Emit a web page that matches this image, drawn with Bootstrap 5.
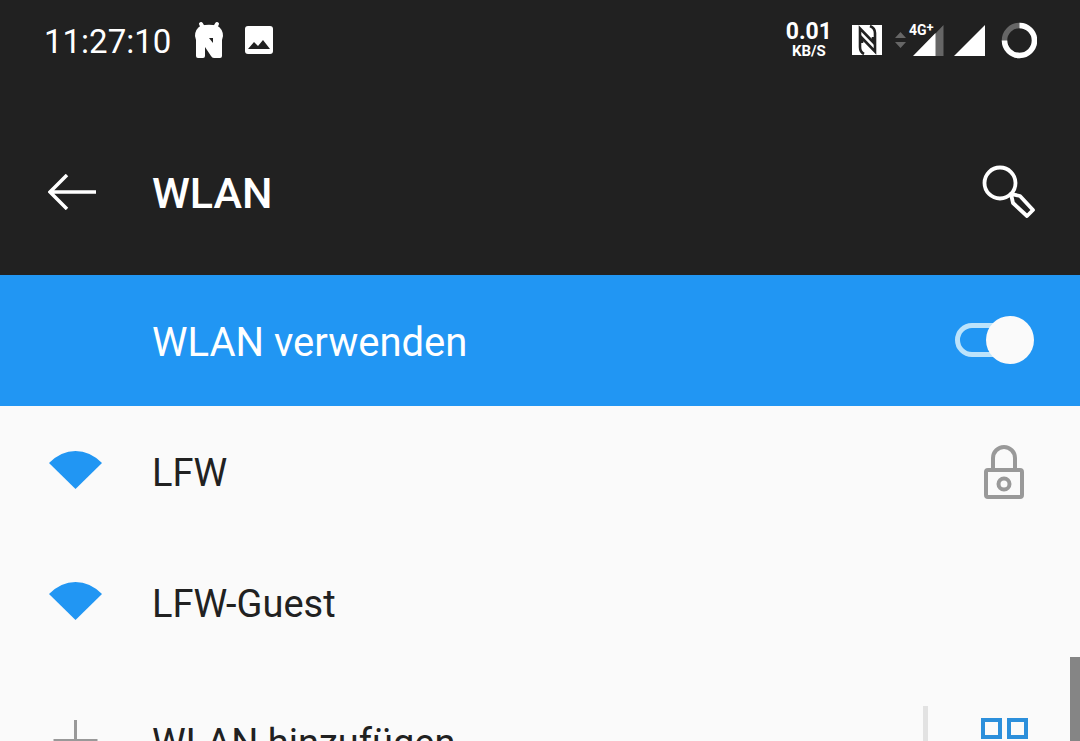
<!DOCTYPE html>
<html lang="de">
<head>
<meta charset="utf-8">
<meta name="viewport" content="width=device-width, initial-scale=1">
<title>WLAN</title>
<link href="https://cdn.jsdelivr.net/npm/bootstrap@5.3.0/dist/css/bootstrap.min.css" rel="stylesheet">
<style>
  body { font-family: Roboto, "Noto Sans", sans-serif; background: #fafafa; color: #212121; }
  svg { display: block; flex: none; }
  .top-area { background: #212121; color: #fff; }
  .status-bar { height: 80px; padding: 0 43px 0 44px; }
  .clock { font-size: 33px; line-height: 40px; padding-top: 4px; }
  .status-icons { gap: 22px; margin-left: 24px; }
  .net-speed { text-align: center; }
  .speed-value { font-size: 23px; line-height: 22px; font-weight: 700; }
  .speed-unit { font-size: 15px; line-height: 16px; font-weight: 700; }
  .title-bar { height: 195px; padding: 28px 44px 0 48px; }
  .title-bar h1 { font-size: 43px; line-height: 48px; font-weight: 500; padding-top: 2px; }
  .lead-col { width: 104px; }
  .setting-row { height: 131px; padding: 0 46px 0 48px; }
  .use-wlan { background: #2196f3; color: #fff; font-size: 40px; }
  .use-wlan label { padding-top: 4px; }
  .net-name { font-size: 38px; line-height: 48px; color: #212121; padding-top: 2px; }
  .wifi-icon { margin-bottom: 3px; }
  .plain-btn { display: block; background: none; border: 0; padding: 0; color: inherit; }
  .toggle { appearance: none; width: 79px; height: 48px; margin: 0 0 2px; cursor: pointer; position: relative; }
  .toggle::before { content: ""; position: absolute; left: 0; top: 7px; width: 66px; height: 34px; border: 5px solid #bce3fb; border-radius: 17px; }
  .toggle::after { content: ""; position: absolute; left: 0; top: 0; width: 48px; height: 48px; border-radius: 50%; background: #fafafa; }
  .toggle:checked::after { left: 31px; }
  .split-line { width: 5px; height: 72px; background: #e2e2e2; }
  .scroll-thumb { position: absolute; right: 0; top: 382px; width: 10px; height: 160px; background: #858585; }
</style>
</head>
<body>
<div class="vh-100 d-flex flex-column overflow-hidden">
  <header class="top-area flex-shrink-0">
    <div class="status-bar d-flex align-items-center">
      <time class="clock">11:27:10</time>
      <div class="status-icons d-flex align-items-center">
        <svg width="28" height="38" viewBox="0 0 28 38" fill="#fff" aria-hidden="true">
          <path d="M6 3l3 5M22 3l-3 5" stroke="#fff" stroke-width="4" stroke-linecap="round"/>
          <path fill-rule="evenodd" d="M0 15Q0 8 6 4.500Q14 3 22 4.500Q28 8 28 15L27 19V35Q27 37 25 37H19Q17 37 16 35L10 26V35Q10 37 8 37H3Q1 37 1 35V19ZM14 17H18V22Z"/>
        </svg>
        <svg width="28" height="28" viewBox="0 0 28 28" aria-hidden="true">
          <rect width="28" height="28" rx="3" fill="#fff"/><path d="M3 23l6-7 4 4 5-6 7 9z" fill="#212121"/>
        </svg>
      </div>
      <div class="ms-auto d-flex align-items-center">
        <div class="net-speed"><div class="speed-value">0.01</div><div class="speed-unit">KB/S</div></div>
        <svg width="205" height="48" viewBox="832 16 205 48" aria-hidden="true">
          <path fill="#fff" d="M852 25h30v30h-30z"/>
          <g fill="none" stroke="#212121" stroke-width="2.600"><path d="M864 54Q860 52 860 47V28.500L873 42V37"/><path d="M870 26Q875 28 875 33V51.500L862 38V43"/></g>
          <path fill="#666" d="M895 38l5.500-6 5.500 6zM895 42l5.500 6 5.500-6zM943.500 25v31H935V34z"/>
          <path fill="#fff" d="M935.500 33v23H913zM985 25v31h-31z"/>
          <path d="M908 22h28v8l-6 5h-22z" fill="#212121"/>
          <text x="909" y="35" fill="#fff" font-size="14" font-weight="700">4G<tspan font-size="13" dy="-3">+</tspan></text>
          <g fill="none" stroke-width="5.500"><circle cx="1019.500" cy="40.500" r="15" stroke="#666"/><path d="M1019.500 25.500a15 15 0 1 1-15 15" stroke="#fff"/></g>
        </svg>
      </div>
    </div>
    <div class="title-bar d-flex align-items-center">
      <div class="lead-col"><button class="plain-btn" aria-label="Zurück">
        <svg width="48" height="36" viewBox="0 0 48 36" fill="none" stroke="#fff" stroke-width="3.500"><path d="M48 18H2M19 1L2 18l17 17"/></svg>
      </button></div>
      <h1 class="m-0">WLAN</h1>
      <button class="plain-btn ms-auto" aria-label="Suchen">
        <svg width="54" height="54" viewBox="0 0 54 54" fill="none" stroke="#fff" stroke-width="3.800"><circle cx="18" cy="18" r="15.500"/><path d="M29 29l2 9 14 13 6-6-13-14z" stroke-linejoin="round"/></svg>
      </button>
    </div>
  </header>
  <main class="flex-grow-1 position-relative">
    <div class="setting-row use-wlan d-flex align-items-center">
      <span class="lead-col"></span>
      <label for="wlan">WLAN verwenden</label>
      <input class="toggle ms-auto" type="checkbox" role="switch" id="wlan" checked>
    </div>
    <ul class="list-unstyled mb-2">
      <li><a href="#" class="setting-row d-flex align-items-center text-decoration-none">
        <span class="lead-col"><svg class="wifi-icon" width="54" height="40" viewBox="0 0 54 40"><path d="M1 13Q13 1 27.500 1T54 13L27.500 39z" fill="#2196f3"/></svg></span>
        <span class="net-name">LFW</span>
        <svg class="ms-auto me-2" width="44" height="54" viewBox="0 0 44 54" fill="none" stroke="#999" stroke-width="4"><rect x="4" y="25" width="36" height="27" rx="2"/><path d="M11 25V13a11 11 0 0 1 22 0v12"/><circle cx="22" cy="39" r="5.500"/></svg>
      </a></li>
      <li><a href="#" class="setting-row d-flex align-items-center text-decoration-none">
        <span class="lead-col"><svg class="wifi-icon" width="54" height="40" viewBox="0 0 54 40"><path d="M1 13Q13 1 27.500 1T54 13L27.500 39z" fill="#2196f3"/></svg></span>
        <span class="net-name">LFW-Guest</span>
      </a></li>
    </ul>
    <div class="setting-row d-flex align-items-center">
      <a href="#" class="d-flex align-items-center text-decoration-none">
        <span class="lead-col"><svg width="54" height="44" viewBox="0 0 54 44" fill="none" stroke="#999" stroke-width="3"><path d="M27.500 0v44M5.500 20.500h44"/></svg></span>
        <span class="net-name">WLAN hinzufügen</span>
      </a>
      <span class="split-line ms-auto"></span>
      <button class="plain-btn ms-5 me-1" aria-label="QR-Code scannen">
        <svg width="54" height="48" viewBox="0 0 54 48" fill="none" stroke="#2c8fdb" stroke-width="4"><path d="M7 2h17v17H7zM33 2h17v17H33zM7 28h17v17H7zM33 28h7v7h-7zM43 38h7v7h-7z"/></svg>
      </button>
    </div>
    <div class="scroll-thumb"></div>
  </main>
</div>
<script src="https://cdn.jsdelivr.net/npm/bootstrap@5.3.0/dist/js/bootstrap.bundle.min.js"></script>
</body>
</html>
